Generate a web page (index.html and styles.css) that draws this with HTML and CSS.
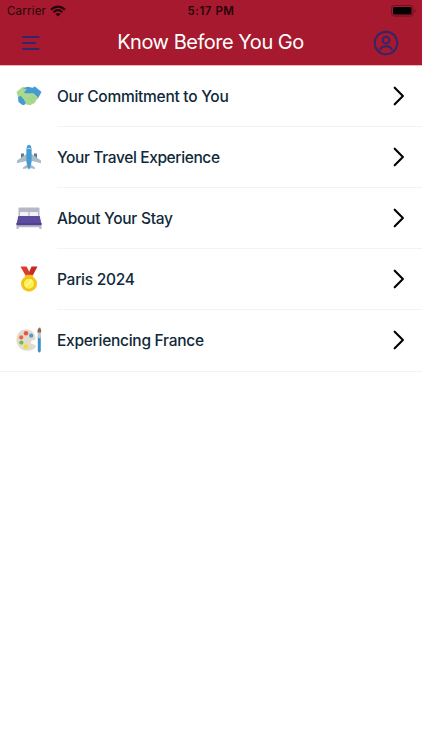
FILE: index.html
```html
<!DOCTYPE html>
<html lang="en">
<head>
<meta charset="utf-8">
<title>Know Before You Go</title>
<link rel="stylesheet" href="styles.css">
</head>
<body>
<header class="header">
  <div class="status">
    <div class="carrier"><span>Carrier</span>
      <svg class="wifi" viewBox="0 0 16 12"><g fill="none" stroke="#26060c" stroke-width="2.1"><path d="M1 4.6Q8-1.5 15 4.6"/><path d="M3.5 7.2Q8 3.2 12.5 7.2"/></g><path d="M5.4 9Q8 6.8 10.6 9L8 11.6Z" fill="#26060c"/></svg>
    </div>
    <span class="time">5:17 PM</span>
    <svg class="battery" viewBox="0 0 26 12"><rect x=".5" y=".5" width="21.5" height="10.6" rx="2.8" fill="none" stroke="#70101f"/><rect x="2" y="2" width="18.5" height="7.6" rx="1.4"/><path d="M23.3 4v3.8q1.4-.6 1.4-1.9T23.3 4" fill="#70101f"/></svg>
  </div>
  <div class="bar">
    <svg class="menu" viewBox="0 0 18 16"><path d="M1.2 2h15.4M1.2 8h12.2M1.2 14h15.4" fill="none" stroke="#31266a" stroke-width="2" stroke-linecap="round"/></svg>
    <h1 class="title">Know Before You Go</h1>
    <svg class="profile" viewBox="0 0 26 26"><g fill="none" stroke="#31266a" stroke-width="1.9"><circle cx="13" cy="13" r="11.3"/><circle cx="13" cy="10.2" r="3.4"/><path d="M7.2 19.2Q9.2 16.3 13 16.3T18.8 19.2" stroke-linecap="round"/></g></svg>
  </div>
</header>
<main class="list">
  <a class="row">
    <svg class="icon" viewBox="0 0 26 26"><path d="M7 5.5 12 4l4 1 3-1.5L25.5 9l-3.8 7-3.5-1L10 9Z" fill="#459bd1"/><path d="M.5 9 6.5 4l7 1.2L10 9l3 1.5 4-.8 5.2 5.1-2 2.5-1.4 2.7-2.3 1.1-2.3 1.2-4.7-1L2.7 16Z" fill="#a9d991"/><path d="m7 5.3 5-1.5 4.5 1.3 3 3.8-2.6 1.4-3.4-.2-3.8.3-1.7-1.2 2.8-3Z" fill="#459bd1"/><path d="m2 14.6 2-1.6 1.8.7.7 1.8 1.5.8.4 1.8 1.2 1-.6 2.3-2.2.8-4.3-3.3Z" fill="#459bd1"/><path d="m15 12.5 4.2 4M12.5 14.5l4.5 4" stroke="#8bc97d" stroke-width=".7"/></svg>
    <span class="label">Our Commitment to You</span>
    <svg class="chevron" viewBox="0 0 12 20"><path d="m1.7 1.7 8.2 8.3-8.2 8.3"/></svg>
  </a>
  <a class="row">
    <svg class="icon" viewBox="0 0 26 26"><path d="M5 9.5h3v6H5zM18 9.5h3v6h-3z" fill="#60798c"/><path d="m11 9.5-10 7v2.7l10-2.5h4l10 2.5v-2.7l-10-7ZM11 20.5l-4 3V25l6-1 6 1v-1.5l-4-3Z" fill="#a8bdcb"/><path d="M13 .7c-1.7 0-2.6 2.5-2.6 5V18l1.6 6 1 1.7 1-1.7 1.6-6V5.7c0-2.5-.9-5-2.6-5Z" fill="#459bd1"/><path d="M11.2 4.8q1.8-1.2 3.6 0" stroke="#b8e5f7" fill="none"/></svg>
    <span class="label label-tight">Your Travel Experience</span>
    <svg class="chevron" viewBox="0 0 12 20"><path d="m1.7 1.7 8.2 8.3-8.2 8.3"/></svg>
  </a>
  <a class="row">
    <svg class="icon" viewBox="0 0 26 26"><path d="M2.5 3.5q0-1 1-1h19q1 0 1 1V13h-21Z" fill="#b6b8c8"/><path d="M5.2 7h6.2q1 0 1 1v5H4V8q0-1 1.2-1ZM14.6 7h6.2q1.2 0 1.2 1v5h-8.4V8q0-1 1-1Z" fill="#f2f1f6"/><path d="M.5 18h25v6h-2.2v-1.7H2.7V24H.5Z" fill="#b6b8c8"/><path d="M2.3 11h21.4l1.8 8.3H.5Z" fill="#5c4ba0"/><path d="M.5 18h25v2.2H.5Z" fill="#52418e"/></svg>
    <span class="label">About Your Stay</span>
    <svg class="chevron" viewBox="0 0 12 20"><path d="m1.7 1.7 8.2 8.3-8.2 8.3"/></svg>
  </a>
  <a class="row">
    <svg class="icon" viewBox="0 0 26 26"><path d="M15.5.5h6l-5.6 10.7-4.4-1.5Z" fill="#c62822"/><path d="M4.5.5h6l5 9.5-4.8 1.5Z" fill="#df3b2b"/><path d="M9 8.8h8v3H9Z" fill="#e6b928"/><circle cx="13" cy="17.7" r="8" fill="#f6c815"/><circle cx="13" cy="17.7" r="5.6" fill="#fff04f" stroke="#e6b91c"/><path d="m9.6 20.4 6.2-6.1" stroke="#fff8a3" stroke-width="1.5"/></svg>
    <span class="label">Paris 2024</span>
    <svg class="chevron" viewBox="0 0 12 20"><path d="m1.7 1.7 8.2 8.3-8.2 8.3"/></svg>
  </a>
  <a class="row">
    <svg class="icon" viewBox="0 0 26 26"><path d="M10 2.3C4.3 2.3.5 7 .5 12.8.5 19 5 23.8 11 23.8c4 0 7.8-1.8 8.7-3.8.8-2-1.3-2.4-3-2.7-3-.6-2-4 .7-4 2.3 0 2.5-1.5 1.8-4C18 5.3 14.6 2.3 10 2.3Z" fill="#e2dccd"/><circle cx="10" cy="6.3" r="2.2" fill="#ed5048"/><circle cx="5.2" cy="10.4" r="2.1" fill="#ef5f4b"/><circle cx="15.2" cy="8.7" r="2.1" fill="#519dce"/><circle cx="5.4" cy="15.6" r="2.1" fill="#71bd4c"/><circle cx="9.8" cy="19.6" r="2.2" fill="#f5dd27"/><path d="M21.8 9h3v15q-1.5 3-3 0Z" fill="#3e91c9"/><path d="M21.7 5h3.2v6.2h-3.2Z" fill="#b7c8d2"/><path d="M21.5 5q-.5-3 2.5-4.8Q25.9 3 25 5.6h-3.5Z" fill="#98634b"/></svg>
    <span class="label">Experiencing France</span>
    <svg class="chevron" viewBox="0 0 12 20"><path d="m1.7 1.7 8.2 8.3-8.2 8.3"/></svg>
  </a>
</main>
</body>
</html>
```
FILE: styles.css
```css
* { box-sizing: border-box; }
body { margin: 0; min-height: 750px; background: #fff; font-family: Inter, sans-serif; color: #10293a; }
svg { display: block; flex: none; }
.header { height: 66px; background: #a6192e; border-bottom: 1px solid #f8b0ba; }
.status { height: 21px; padding: 0 5px 0 7px; display: grid; grid-template-columns: 1fr auto 1fr; align-items: center; color: #26060c; }
.carrier { display: flex; align-items: center; gap: 4px; font-size: 11.5px; letter-spacing: .2px; }
.wifi { width: 16px; height: 12px; }
.time { font-size: 11.5px; font-weight: 600; letter-spacing: .5px; margin-right: 2px; }
.battery { width: 26px; height: 12px; justify-self: end; }
.bar { height: 44px; padding: 0 23px 0 22px; display: grid; grid-template-columns: 26px 1fr 26px; align-items: center; }
.menu { width: 18px; height: 16px; }
.title { margin: 0 0 2px; text-align: center; font-size: 20px; line-height: 24px; font-weight: 400; color: #fff; letter-spacing: -.48px; }
.profile { width: 26px; height: 26px; }
.row { display: flex; align-items: center; height: 61.1px; padding: 0 17px 1.5px 16px; background: linear-gradient(#f3f3f4, #f3f3f4) 57px 100% / 100% 1px no-repeat; }
.row:last-child { height: 61.4px; background-position: 0 100%; }
.icon { width: 26px; height: 26px; }
.label { flex: 1; margin-left: 15px; padding-top: 1.7px; font-size: 15.5px; line-height: 20px; font-weight: 500; letter-spacing: -.27px; }
.label-tight { letter-spacing: -.38px; }
.chevron { width: 12px; height: 20px; fill: none; stroke: #000; stroke-width: 2.1; stroke-linecap: round; stroke-linejoin: round; }
```
